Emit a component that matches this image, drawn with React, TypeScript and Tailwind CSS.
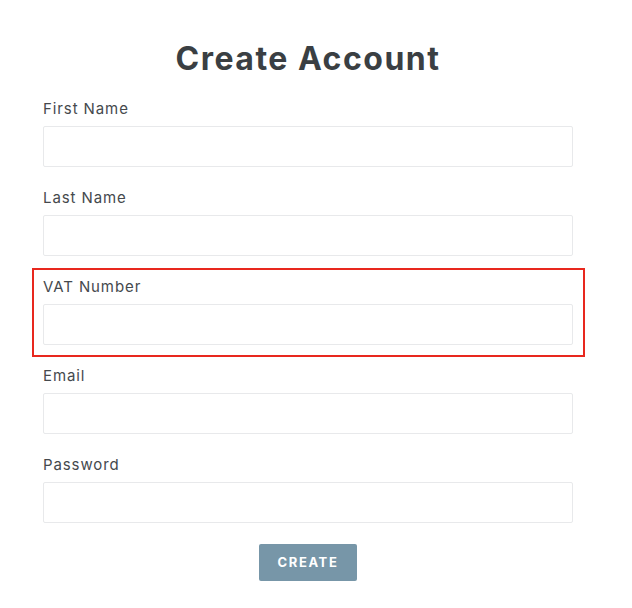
import React from 'react';

const fields = ['First Name', 'Last Name', 'VAT Number', 'Email', 'Password'];

const Field: React.FC<{ label: string; highlight?: boolean }> = ({ label, highlight }) => (
  <div className="relative flex flex-col">
    {highlight && (
      <div className="pointer-events-none absolute -top-[7px] -bottom-[12px] -left-[11px] -right-[12px] border-2 border-[#e8281e]" />
    )}
    <label className="pt-[1px] text-[15px] leading-[22px] tracking-[0.9px] text-[#45494d]">{label}</label>
    <input
      type={label === 'Password' ? 'password' : 'text'}
      className="mt-[6px] h-[41px] w-full rounded-[2px] border border-[#e8e9eb] bg-white px-3 outline-none"
    />
  </div>
);

export default function App() {
  return (
    <div className="min-h-[608px] bg-white font-['Inter',sans-serif] text-[#3d4246]">
      <div className="ml-[43px] flex w-[530px] flex-col pt-[38px]">
        <h1 className="text-center text-[32px] font-bold leading-[42px] tracking-[1.5px] text-[#3a3f43]">
          Create Account
        </h1>
        <div className="mt-[17px] flex flex-col gap-[19px]">
          {fields.map(f => (
            <Field key={f} label={f} highlight={f === 'VAT Number'} />
          ))}
        </div>
        <div className="mt-[21px] flex justify-center">
          <button
            type="button"
            className="h-[37px] w-[98px] rounded-[2px] bg-[#7796a8] text-[13px] font-bold uppercase tracking-[1.6px] text-white"
          >
            Create
          </button>
        </div>
      </div>
    </div>
  );
}
